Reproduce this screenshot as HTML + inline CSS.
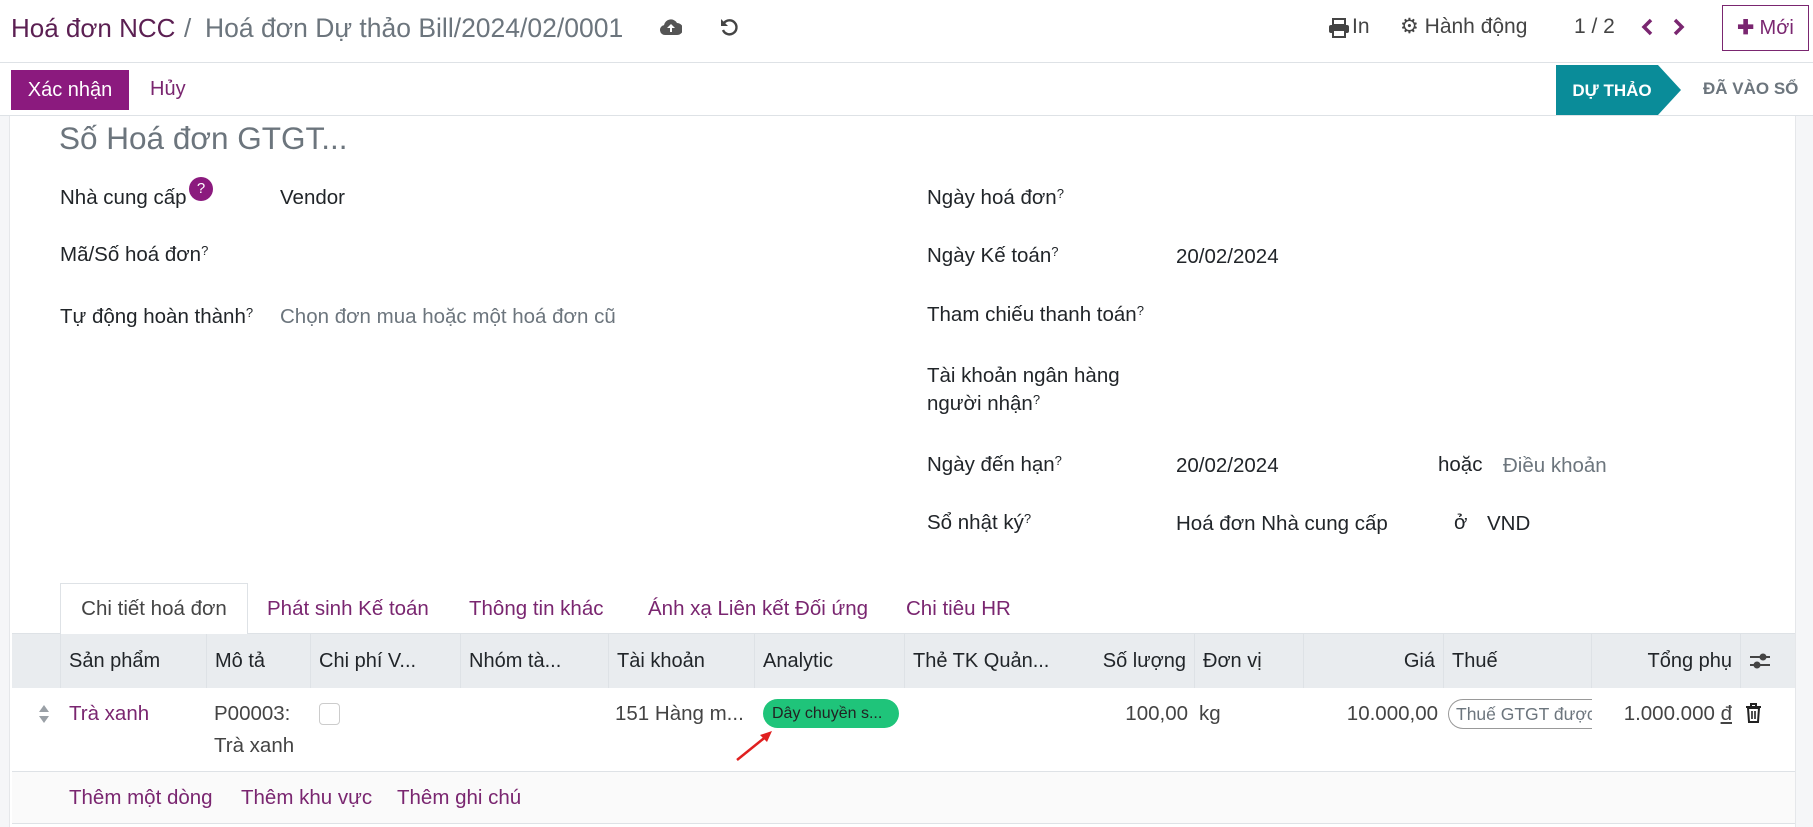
<!DOCTYPE html>
<html><head><meta charset="utf-8"><style>
*{margin:0;padding:0;box-sizing:border-box}
body{width:1813px;height:827px;overflow:hidden;background:#fff;font-family:"Liberation Sans",sans-serif;color:#212529;position:relative;font-size:20.5px}
.a{position:absolute;white-space:nowrap}
.p{color:#7a2670}
.g{color:#6c757d}
.lbl{font-size:20.5px;line-height:22px}
sup{font-size:13px;vertical-align:top;position:relative;top:-4px}
.th{position:absolute;top:634px;height:54px;line-height:54px;font-size:20px;color:#212529;border-left:1px solid #dee2e6;padding:0 8px;white-space:nowrap;overflow:hidden}
.td{font-size:20.5px;color:#444}
</style></head><body>
<!-- header -->
<div class="a" style="left:11px;top:12px;font-size:26px;line-height:32px;color:#5b1f52">Hoá đơn NCC</div>
<div class="a" style="left:184px;top:12px;font-size:26px;line-height:32px;color:#6c757d">/</div>
<div class="a" style="left:205px;top:12px;font-size:26.5px;line-height:32px;color:#6c757d">Hoá đơn Dự thảo Bill/2024/02/0001</div>
<svg class="a" style="left:660px;top:18px" width="22" height="18" viewBox="0 0 22 18"><path d="M5 17a5 5 0 0 1-1-9.9A7 7 0 0 1 17 5a5 5 0 0 1 0 12z" fill="#555"/><path d="M11 6l-4 4h3v4h2v-4h3z" fill="#fff"/></svg>
<svg class="a" style="left:719px;top:17px" width="20" height="20" viewBox="0 0 20 20"><path d="M5 6a7 7 0 1 1-1 7" fill="none" stroke="#444" stroke-width="2.4"/><path d="M2 2v7h7z" fill="#444"/></svg>
<svg class="a" style="left:1328px;top:18px" width="22" height="20" viewBox="0 0 22 20"><rect x="5" y="1" width="12" height="6" fill="none" stroke="#444" stroke-width="2"/><rect x="1" y="7" width="20" height="8" rx="2" fill="#444"/><rect x="5" y="12" width="12" height="7" fill="#fff" stroke="#444" stroke-width="2"/></svg>
<div class="a" style="left:1352px;top:15px;font-size:21px;color:#444">In</div>
<div class="a" style="left:1400px;top:14px;font-size:21px;color:#444">⚙ Hành động</div>
<div class="a" style="left:1574px;top:15px;font-size:21px;color:#444">1 / 2</div>
<svg class="a" style="left:1640px;top:18px" width="14" height="18" viewBox="0 0 14 18"><path d="M11 2L4 9l7 7" fill="none" stroke="#7a2670" stroke-width="3.5"/></svg>
<svg class="a" style="left:1672px;top:18px" width="14" height="18" viewBox="0 0 14 18"><path d="M3 2l7 7-7 7" fill="none" stroke="#7a2670" stroke-width="3.5"/></svg>
<div class="a" style="left:1722px;top:5px;width:87px;height:46px;border:1px solid #7a2670;color:#7a2670;font-size:20px;line-height:44px;text-align:center"><b>✚</b> Mới</div>
<div class="a" style="left:0;top:62px;width:1813px;height:1px;background:#dee2e6"></div>
<!-- toolbar -->
<div class="a" style="left:11px;top:70px;width:118px;height:40px;background:#8b1a7e;color:#fff;font-size:20px;line-height:40px;text-align:center">Xác nhận</div>
<div class="a" style="left:150px;top:78px;font-size:20px;color:#7a2670">Hủy</div>
<svg class="a" style="left:1556px;top:65px" width="126" height="50"><path d="M0 0H102L125 25L102 50H0z" fill="#0a8c99"/><text x="56" y="31" font-family="Liberation Sans" font-size="17" font-weight="bold" fill="#fff" text-anchor="middle">DỰ THẢO</text></svg>
<div class="a" style="left:1703px;top:79px;font-size:17px;font-weight:bold;color:#6c757d">ĐÃ VÀO SỔ</div>
<div class="a" style="left:0;top:115px;width:1813px;height:1px;background:#dee2e6"></div>
<div class="a" style="left:0;top:116px;width:10px;height:711px;background:#f5f6f8;border-right:1px solid #e5e7ea"></div>
<div class="a" style="left:1795px;top:116px;width:18px;height:711px;background:#f5f6f8;border-left:1px solid #e5e7ea"></div>
<!-- title -->
<div class="a g" style="left:59px;top:119px;font-size:31.5px;line-height:38px">Số Hoá đơn GTGT...</div>
<!-- left fields -->
<div class="a lbl" style="left:60px;top:187px">Nhà cung cấp</div>
<div class="a" style="left:189px;top:177px;width:24px;height:24px;border-radius:50%;background:#8b1a7e;color:#fff;font-size:15px;line-height:24px;text-align:center">?</div>
<div class="a lbl" style="left:280px;top:187px">Vendor</div>
<div class="a lbl" style="left:60px;top:244px">Mã/Số hoá đơn<sup>?</sup></div>
<div class="a lbl" style="left:60px;top:306px">Tự động hoàn thành<sup>?</sup></div>
<div class="a lbl g" style="left:280px;top:306px">Chọn đơn mua hoặc một hoá đơn cũ</div>
<!-- right fields -->
<div class="a lbl" style="left:927px;top:187px">Ngày hoá đơn<sup>?</sup></div>
<div class="a lbl" style="left:927px;top:245px">Ngày Kế toán<sup>?</sup></div>
<div class="a lbl" style="left:1176px;top:246px">20/02/2024</div>
<div class="a lbl" style="left:927px;top:304px">Tham chiếu thanh toán<sup>?</sup></div>
<div class="a lbl" style="left:927px;top:365px">Tài khoản ngân hàng</div>
<div class="a lbl" style="left:927px;top:393px">người nhận<sup>?</sup></div>
<div class="a lbl" style="left:927px;top:454px">Ngày đến hạn<sup>?</sup></div>
<div class="a lbl" style="left:1176px;top:455px">20/02/2024</div>
<div class="a lbl" style="left:1438px;top:454px">hoặc</div>
<div class="a lbl g" style="left:1503px;top:455px">Điều khoản</div>
<div class="a lbl" style="left:927px;top:512px">Sổ nhật ký<sup>?</sup></div>
<div class="a lbl" style="left:1176px;top:513px">Hoá đơn Nhà cung cấp</div>
<div class="a lbl" style="left:1454px;top:512px">ở</div>
<div class="a lbl" style="left:1487px;top:513px">VND</div>
<!-- tabs -->
<div class="a" style="left:12px;top:633px;width:1783px;height:1px;background:#dee2e6"></div>
<div class="a" style="left:60px;top:583px;width:188px;height:52px;border:1px solid #dee2e6;border-bottom:none;background:#fff;font-size:20.5px;line-height:50px;text-align:center;color:#444">Chi tiết hoá đơn</div>
<div class="a p" style="left:267px;top:597px;font-size:20.5px">Phát sinh Kế toán</div>
<div class="a p" style="left:469px;top:597px;font-size:20.5px">Thông tin khác</div>
<div class="a p" style="left:648px;top:597px;font-size:20.5px">Ánh xạ Liên kết Đối ứng</div>
<div class="a p" style="left:906px;top:597px;font-size:20.5px">Chi tiêu HR</div>
<!-- table header -->
<div class="a" style="left:12px;top:634px;width:1783px;height:54px;background:#e9ecef"></div>
<div class="th" style="left:60px;width:146px">Sản phẩm</div>
<div class="th" style="left:206px;width:104px">Mô tả</div>
<div class="th" style="left:310px;width:150px">Chi phí V...</div>
<div class="th" style="left:460px;width:148px">Nhóm tà...</div>
<div class="th" style="left:608px;width:146px">Tài khoản</div>
<div class="th" style="left:754px;width:150px">Analytic</div>
<div class="th" style="left:904px;width:150px">Thẻ TK Quản...</div>
<div class="th" style="left:1054px;width:140px;text-align:right;border-left:none">Số lượng</div>
<div class="th" style="left:1194px;width:109px">Đơn vị</div>
<div class="th" style="left:1303px;width:140px;text-align:right">Giá</div>
<div class="th" style="left:1443px;width:148px">Thuế</div>
<div class="th" style="left:1591px;width:149px;text-align:right">Tổng phụ</div>
<div class="th" style="left:1740px;width:55px"></div>
<svg class="a" style="left:1748px;top:650px" width="24" height="22" viewBox="0 0 24 22"><path d="M2 7H22M2 15H22" stroke="#444" stroke-width="2"/><circle cx="15" cy="7" r="3.5" fill="#444"/><circle cx="9" cy="15" r="3.5" fill="#444"/></svg>
<!-- row -->
<svg class="a" style="left:38px;top:704px" width="12" height="20" viewBox="0 0 12 20"><path d="M6 1L11 8H1zM6 19L11 12H1z" fill="#9aa0a6"/></svg>
<div class="a p" style="left:69px;top:702px;font-size:20.5px">Trà xanh</div>
<div class="a td" style="left:214px;top:702px">P00003:</div>
<div class="a td" style="left:214px;top:734px">Trà xanh</div>
<div class="a" style="left:319px;top:703px;width:21px;height:22px;border:1px solid #ccc;border-radius:4px"></div>
<div class="a td" style="left:615px;top:702px">151 Hàng m...</div>
<div class="a" style="left:763px;top:699px;width:136px;height:29px;border-radius:15px;background:#1fc47a;font-size:16px;line-height:29px;padding-left:9px;color:#222;overflow:hidden">Dây chuyền s...</div>
<svg class="a" style="left:730px;top:725px" width="50" height="40"><path d="M7 35L38 10" stroke="#e02020" stroke-width="2.5"/><path d="M42 6L30 10L37 17z" fill="#e02020"/></svg>
<div class="a td" style="left:1054px;top:702px;width:134px;text-align:right">100,00</div>
<div class="a td" style="left:1199px;top:702px">kg</div>
<div class="a td" style="left:1303px;top:702px;width:135px;text-align:right">10.000,00</div>
<div class="a" style="left:1448px;top:699px;width:144px;height:30px;border:1px solid #999;border-right:none;border-radius:15px 0 0 15px;font-size:17.5px;line-height:28px;padding-left:7px;color:#6c757d;overflow:hidden">Thuế GTGT được</div>
<div class="a td" style="left:1591px;top:702px;width:141px;text-align:right">1.000.000 <u>đ</u></div>
<svg class="a" style="left:1745px;top:703px" width="17" height="20" viewBox="0 0 17 20"><path d="M1 4H16M6 4V1H11V4" stroke="#222" stroke-width="2" fill="none"/><path d="M3 5H14L13 19H4z" fill="none" stroke="#222" stroke-width="2"/><path d="M7 8V16M10 8V16" stroke="#222" stroke-width="1.6"/></svg>
<div class="a" style="left:12px;top:771px;width:1783px;height:1px;background:#dee2e6"></div>
<div class="a" style="left:12px;top:772px;width:1783px;height:51px;background:#fafafa"></div>
<div class="a p" style="left:69px;top:786px;font-size:20.5px">Thêm một dòng</div>
<div class="a p" style="left:241px;top:786px;font-size:20.5px">Thêm khu vực</div>
<div class="a p" style="left:397px;top:786px;font-size:20.5px">Thêm ghi chú</div>
<div class="a" style="left:12px;top:823px;width:1783px;height:1px;background:#dee2e6"></div>
</body></html>
